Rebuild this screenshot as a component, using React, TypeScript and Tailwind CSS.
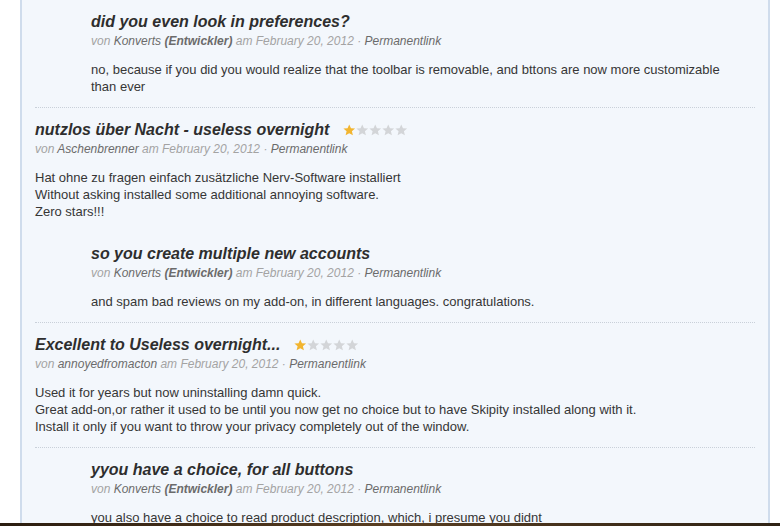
import type { ReactNode } from 'react';

function Stars({ rating }: { rating: number }) {
  return (
    <span className="ml-[14px] inline-flex items-center gap-[0.5px] align-middle">
      {[0, 1, 2, 3, 4].map((i) => (
        <svg key={i} width="12.5" height="12" viewBox="0 0 24 23">
          <polygon
            points="12,0.8 15.3,8 23.2,8.6 17.1,13.9 19,21.8 12,17.6 5,21.8 6.9,13.9 0.8,8.6 8.7,8"
            fill={i < rating ? '#f2b530' : '#d3d5d8'}
          />
        </svg>
      ))}
    </span>
  );
}

function Meta({ author, dev, date }: { author: string; dev?: boolean; date: string }) {
  return (
    <div className="mt-[2px] text-[12px] leading-[16px] italic text-[#a3a3a3]">
      von <span className="text-[#6b6b6b]">{author}</span>
      {dev && <span className="font-bold text-[#6b6b6b]"> (Entwickler)</span>} am {date} ·{' '}
      <span className="text-[#6b6b6b]">Permanentlink</span>
    </div>
  );
}

function Body({ lines }: { lines: string[] }) {
  return (
    <div className="mt-3 text-[13px] leading-[17px] text-[#363636]">
      {lines.map((l, i) => (
        <div key={i}>{l}</div>
      ))}
    </div>
  );
}

function Entry({ title, author, dev, date, lines, rating, children }: {
  title: string;
  author: string;
  dev?: boolean;
  date: string;
  lines: string[];
  rating?: number;
  children?: ReactNode;
}) {
  return (
    <div>
      <h3 className="flex items-center text-[16px] leading-[19px] font-bold italic text-[#2e2e2e]">
        {title}
        {rating !== undefined && <Stars rating={rating} />}
      </h3>
      <Meta author={author} dev={dev} date={date} />
      <Body lines={lines} />
      {children}
    </div>
  );
}

const DATE = 'February 20, 2012';

export default function App() {
  return (
    <div
      className="flex h-[526px] w-[780px] flex-col overflow-hidden bg-white"
      style={{ fontFamily: '"Liberation Sans", Arial, sans-serif' }}
    >
      <div className="flex min-h-0 flex-1">
        <div className="ml-[20px] w-[750px] overflow-hidden border-x-2 border-[#cfdcec] bg-[#f3f7fc] px-[13px] pt-[12px]">
          {/* first reply, continued from previous review */}
          <div className="border-b border-dotted border-[#c9d0d9] pb-3 pl-[56px]">
            <Entry
              title="did you even look in preferences?"
              author="Konverts"
              dev
              date={DATE}
              lines={[
                'no, because if you did you would realize that the toolbar is removable, and bttons are now more customizable',
                'than ever',
              ]}
            />
          </div>

          <div className="border-b border-dotted border-[#c9d0d9] pt-3 pb-3">
            <Entry
              title="nutzlos über Nacht - useless overnight"
              author="Aschenbrenner"
              date={DATE}
              rating={1}
              lines={[
                'Hat ohne zu fragen einfach zusätzliche Nerv-Software installiert',
                'Without asking installed some additional annoying software.',
                'Zero stars!!!',
              ]}
            >
              <div className="mt-6 pl-[56px]">
                <Entry
                  title="so you create multiple new accounts"
                  author="Konverts"
                  dev
                  date={DATE}
                  lines={['and spam bad reviews on my add-on, in different languages. congratulations.']}
                />
              </div>
            </Entry>
          </div>

          <div className="border-b border-dotted border-[#c9d0d9] pt-3 pb-3">
            <Entry
              title="Excellent to Useless overnight..."
              author="annoyedfromacton"
              date={DATE}
              rating={1}
              lines={[
                'Used it for years but now uninstalling damn quick.',
                'Great add-on,or rather it used to be until you now get no choice but to have Skipity installed along with it.',
                'Install it only if you want to throw your privacy completely out of the window.',
              ]}
            />
          </div>

          <div className="pt-3 pl-[56px]">
            <Entry
              title="yyou have a choice, for all buttons"
              author="Konverts"
              dev
              date={DATE}
              lines={['you also have a choice to read product description, which, i presume you didnt']}
            />
          </div>
        </div>
      </div>
      <div className="h-[3px] shrink-0 bg-gradient-to-r from-[#2b1d10] via-[#5a3f22] to-[#2e2214]" />
    </div>
  );
}
